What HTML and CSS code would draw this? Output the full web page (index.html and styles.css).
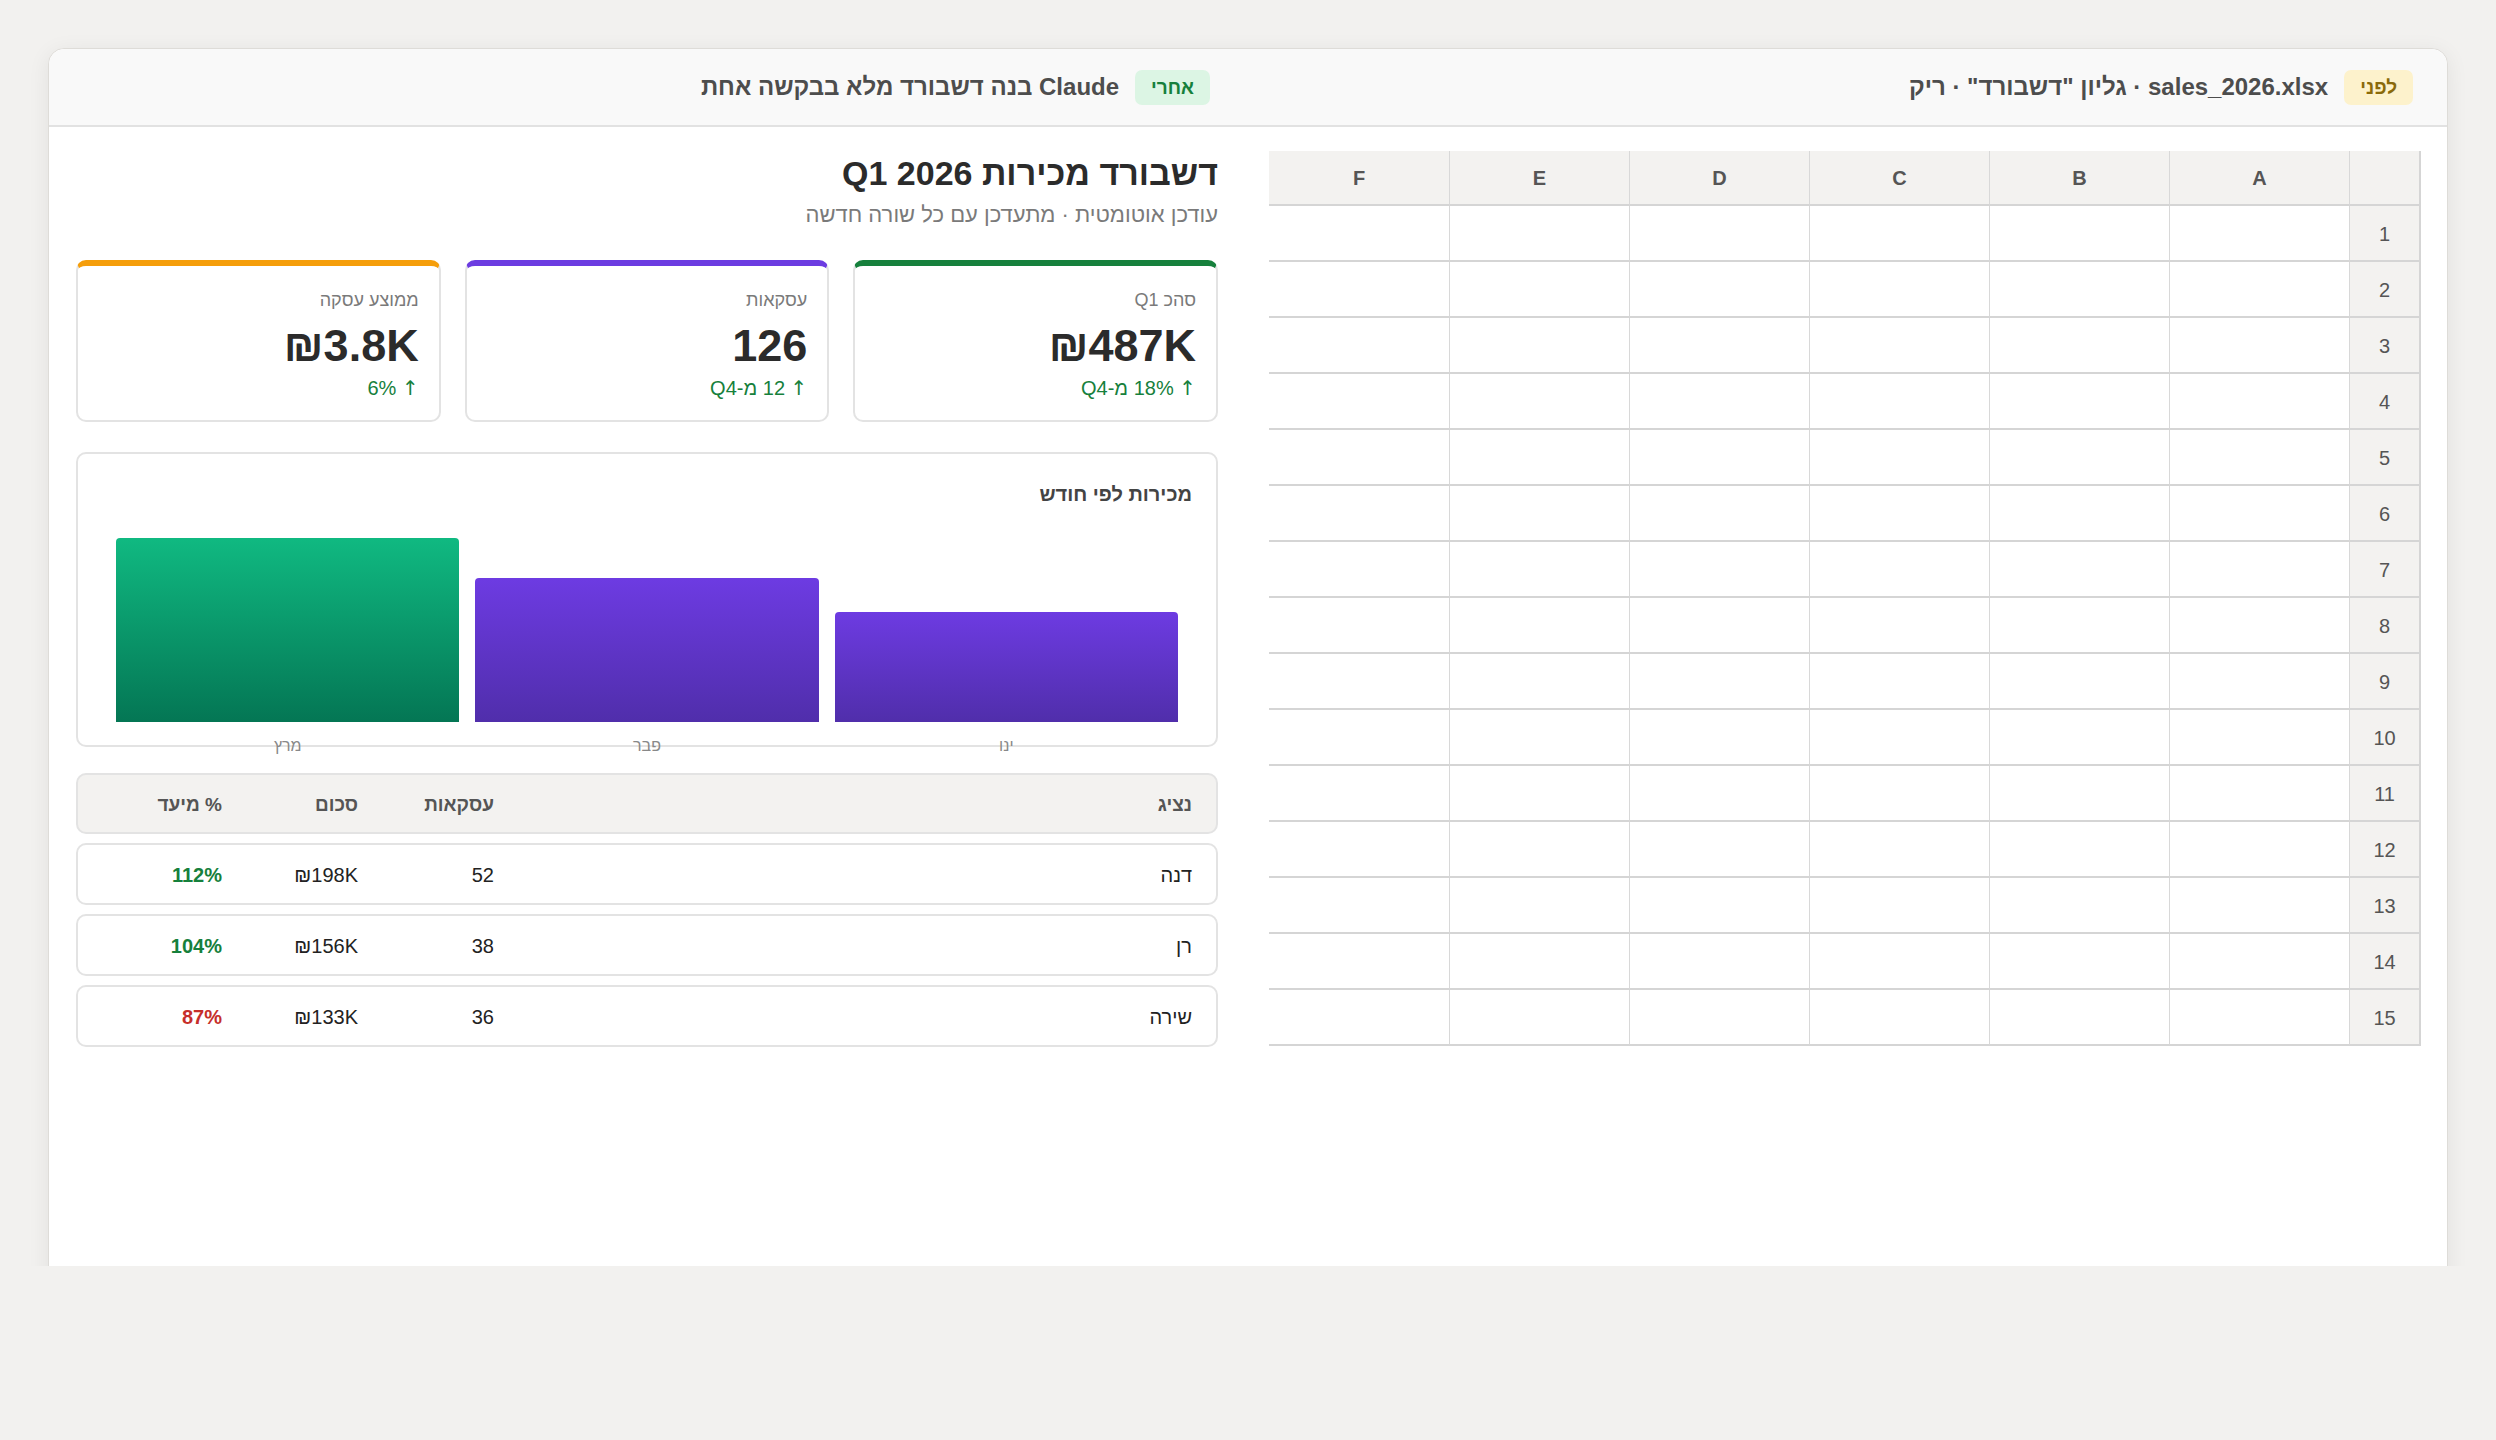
FILE: index.html
```html
<!DOCTYPE html>
<html lang="he" dir="rtl">
<head>
    <meta charset="UTF-8">
    <meta name="viewport" content="width=device-width, initial-scale=1.0">
    <title>לפני ואחרי - דשבורד מכירות</title>
    <link rel="stylesheet" href="styles.css">
</head>
<body>
    <div class="page">
        <div class="window">
            <div class="topbar">
                <div class="topbar-side">
                    <span class="badge badge-before">לפני</span>
                    <span class="topbar-text">sales_2026.xlsx · גליון "דשבורד" · ריק</span>
                </div>
                <div class="topbar-side">
                    <span class="badge badge-after">אחרי</span>
                    <span class="topbar-text">Claude בנה דשבורד מלא בבקשה אחת</span>
                </div>
            </div>

            <div class="main">
                <div class="sheet" id="sheet"></div>

                <div class="dash">
                    <h1>דשבורד מכירות Q1 2026</h1>
                    <p class="subtitle">עודכן אוטומטית · מתעדכן עם כל שורה חדשה</p>

                    <div class="stats">
                        <div class="stat stat-green">
                            <div class="stat-label">סהכ Q1</div>
                            <div class="stat-value">₪487K</div>
                            <div class="stat-change"><span class="arrow">↑</span> 18% מ-Q4</div>
                        </div>
                        <div class="stat stat-purple">
                            <div class="stat-label">עסקאות</div>
                            <div class="stat-value">126</div>
                            <div class="stat-change"><span class="arrow">↑</span> 12 מ-Q4</div>
                        </div>
                        <div class="stat stat-orange">
                            <div class="stat-label">ממוצע עסקה</div>
                            <div class="stat-value">₪3.8K</div>
                            <div class="stat-change"><span class="arrow">↑</span> 6%</div>
                        </div>
                    </div>

                    <div class="chart">
                        <div class="chart-title">מכירות לפי חודש</div>
                        <div class="bars">
                            <div class="bar-col">
                                <div class="bar-slot"><div class="bar" style="height: 110px;"></div></div>
                                <div class="bar-label">ינו</div>
                            </div>
                            <div class="bar-col">
                                <div class="bar-slot"><div class="bar" style="height: 144px;"></div></div>
                                <div class="bar-label">פבר</div>
                            </div>
                            <div class="bar-col">
                                <div class="bar-slot"><div class="bar bar-current" style="height: 184px;"></div></div>
                                <div class="bar-label">מרץ</div>
                            </div>
                        </div>
                    </div>

                    <div class="reps">
                        <div class="rep-row rep-head">
                            <span>נציג</span>
                            <span>עסקאות</span>
                            <span>סכום</span>
                            <span>% מיעד</span>
                        </div>
                        <div class="rep-row">
                            <span>דנה</span>
                            <span>52</span>
                            <span>₪198K</span>
                            <span class="pct good">112%</span>
                        </div>
                        <div class="rep-row">
                            <span>רן</span>
                            <span>38</span>
                            <span>₪156K</span>
                            <span class="pct good">104%</span>
                        </div>
                        <div class="rep-row">
                            <span>שירה</span>
                            <span>36</span>
                            <span>₪133K</span>
                            <span class="pct bad">87%</span>
                        </div>
                    </div>
                </div>
            </div>
        </div>
    </div>

    <script>
        // גליון ריק: כותרות עמודות + 15 שורות
        const sheet = document.getElementById('sheet');
        const cols = ['A', 'B', 'C', 'D', 'E', 'F'];

        function addCell(cls, text) {
            const cell = document.createElement('div');
            cell.className = cls;
            if (text) cell.textContent = text;
            sheet.appendChild(cell);
        }

        addCell('cell head corner', '');
        cols.forEach(c => addCell('cell head', c));

        for (let r = 1; r <= 15; r++) {
            addCell('cell rownum', String(r));
            cols.forEach(() => addCell('cell', ''));
        }
    </script>
</body>
</html>
```

FILE: styles.css
```css
:root {
    --page-bg: #f2f1ef;
    --line: #e3e3e3;
    --grid-line: #d5d5d5;
    --head-bg: #f3f2f0;
    --text: #2b2b2b;
    --muted: #7a7a7a;
    --green: #16803c;
    --purple: #6c3ce1;
    --orange: #f59e0b;
    --red: #c62f2a;
}
body {
    margin: 0;
    background: var(--page-bg);
    font-family: "Liberation Sans", Arial, sans-serif;
    color: var(--text);
}
.page {
    height: 1266px;
    overflow: hidden;
    padding: 48px 48px 0;
    box-sizing: border-box;
}
.window {
    height: 1320px;
    background: #fff;
    border: 1px solid #dedcd8;
    border-radius: 16px;
    box-shadow: 0 4px 22px rgba(0, 0, 0, 0.07);
}

/* top bar */
.topbar {
    display: grid;
    grid-template-columns: 1152px 1142px;
    column-gap: 51px;
    padding: 0 26px 0 25px;
    height: 76px;
    align-items: center;
    background: #f9f9f9;
    border-bottom: 2px solid #e2e2e2;
    border-radius: 16px 16px 0 0;
}
.topbar-side {
    display: flex;
    align-items: center;
    gap: 16px;
    padding-right: 8px;
}
.badge {
    font-size: 19px;
    font-weight: 700;
    line-height: 21px;
    padding: 7px 16px;
    border-radius: 7px;
}
.badge-before { background: #fdf2cc; color: #8a6a0a; }
.badge-after { background: #dcf5e4; color: var(--green); }
.topbar-text {
    font-size: 24px;
    font-weight: 700;
    color: #4d4d4d;
}

/* body */
.main {
    display: grid;
    grid-template-columns: 1152px 1142px;
    column-gap: 51px;
    padding: 24px 26px 0 25px;
    align-items: start;
}

/* spreadsheet */
.sheet {
    display: grid;
    grid-template-columns: 72px repeat(6, 180px);
}
.cell {
    height: 54px;
    border-bottom: 2px solid var(--grid-line);
    border-left: 1px solid #d8d8d8;
    box-sizing: content-box;
    display: flex;
    align-items: center;
    justify-content: center;
    font-size: 20px;
    color: #555;
}
.cell:nth-child(7n) { border-left: none; }
.head {
    padding-top: 2px;
    box-sizing: border-box;
    height: 55px;
    background: var(--head-bg);
    font-size: 20px;
    font-weight: 700;
}
.rownum,
.corner {
    background: var(--head-bg);
    border-right: 2px solid var(--grid-line);
    padding-top: 3px;
    height: 51px;
}
.corner { height: 55px; padding-top: 0; }

/* dashboard */
.dash h1 {
    margin: 0;
    font-size: 34px;
    line-height: 44px;
    font-weight: 700;
}
.subtitle {
    margin: 6px 0 0;
    font-size: 22px;
    line-height: 28px;
    color: var(--muted);
}
.stats {
    display: grid;
    grid-template-columns: repeat(3, 1fr);
    gap: 24px;
    margin-top: 31px;
}
.stat {
    height: 162px;
    box-sizing: border-box;
    border: 2px solid var(--line);
    border-top: 6px solid;
    border-radius: 10px;
    padding: 23px 20px 0;
}
.stat-green { border-top-color: var(--green); }
.stat-purple { border-top-color: var(--purple); }
.stat-orange { border-top-color: var(--orange); }
.stat-label {
    font-size: 18px;
    line-height: 22px;
    color: var(--muted);
}
.stat-value {
    margin-top: 10px;
    font-size: 45px;
    line-height: 50px;
    font-weight: 700;
}
.stat-change {
    margin-top: 5px;
    font-size: 20px;
    line-height: 24px;
    color: var(--green);
}
.arrow {
    font-family: "DejaVu Sans", sans-serif;
    font-size: 20px;
}

.chart {
    margin-top: 30px;
    height: 295px;
    box-sizing: border-box;
    border: 2px solid var(--line);
    border-radius: 10px;
    padding: 27px 24px 24px;
}
.chart-title {
    font-size: 20px;
    line-height: 26px;
    font-weight: 700;
    color: #444;
}
.bars {
    display: flex;
    gap: 16px;
    padding: 0 14px;
    margin-top: 9px;
}
.bar-col { flex: 1; }
.bar-slot {
    height: 206px;
    display: flex;
    flex-direction: column;
    justify-content: flex-end;
}
.bar {
    border-radius: 4px 4px 0 0;
    background: linear-gradient(180deg, #6d3be2 0%, #502eab 100%);
}
.bar-current {
    background: linear-gradient(180deg, #10b981 0%, #047654 100%);
}
.bar-label {
    margin-top: 14px;
    text-align: center;
    font-size: 16px;
    line-height: 20px;
    color: #888;
}

.reps {
    margin-top: 26px;
    display: flex;
    flex-direction: column;
    gap: 9px;
}
.rep-row {
    display: grid;
    grid-template-columns: 1fr 120px 120px 120px;
    gap: 16px;
    padding: 2px 24px 0;
    height: 62px;
    box-sizing: border-box;
    align-items: center;
    border: 2px solid var(--line);
    border-radius: 10px;
    font-size: 20px;
    color: #222;
}
.rep-head {
    height: 61px;
    background: var(--head-bg);
    font-size: 19px;
    font-weight: 700;
    color: #555;
}
.pct { font-weight: 700; }
.good { color: var(--green); }
.bad { color: var(--red); }
```
